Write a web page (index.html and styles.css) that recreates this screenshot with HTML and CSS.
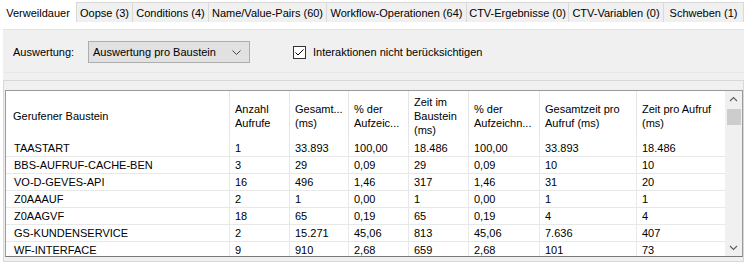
FILE: index.html
```html
<!DOCTYPE html>
<html>
<head>
<meta charset="utf-8">
<link rel="stylesheet" href="styles.css">
</head>
<body>
<div class="tabs">
  <div class="tab active">Verweildauer</div>
  <div class="tab">Oopse (3)</div>
  <div class="tab">Conditions (4)</div>
  <div class="tab">Name/Value-Pairs (60)</div>
  <div class="tab">Workflow-Operationen (64)</div>
  <div class="tab">CTV-Ergebnisse (0)</div>
  <div class="tab">CTV-Variablen (0)</div>
  <div class="tab last">Schweben (1)</div>
</div>
<div class="page">
  <div class="toolbar">
    <span class="label">Auswertung:</span>
    <div class="combo">
      <span>Auswertung pro Baustein</span>
      <svg class="chev" width="9" height="5" viewBox="0 0 9 5"><path d="M0.5 0.5 L4.5 4.5 L8.5 0.5" fill="none" stroke="#444" stroke-width="1"/></svg>
    </div>
    <label class="check">
      <span class="box"><svg width="11" height="11" viewBox="0 0 11 11"><path d="M1.5 5.5 L4 8 L9.5 2.5" fill="none" stroke="#000" stroke-width="1"/></svg></span>
      <span>Interaktionen nicht berücksichtigen</span>
    </label>
  </div>
  <div class="splitter"></div>
  <div class="gridpanel">
    <div class="grid">
      <div class="cells">
        <div class="hd first"><span>Gerufener Baustein</span></div>
        <div class="hd"><span>Anzahl<br>Aufrufe</span></div>
        <div class="hd"><span>Gesamt...<br>(ms)</span></div>
        <div class="hd"><span>% der<br>Aufzeic...</span></div>
        <div class="hd"><span>Zeit im<br>Baustein<br>(ms)</span></div>
        <div class="hd"><span>% der<br>Aufzeichn...</span></div>
        <div class="hd"><span>Gesamtzeit pro<br>Aufruf (ms)</span></div>
        <div class="hd lastcol"><span>Zeit pro Aufruf<br>(ms)</span></div>

        <div class="c first">TAASTART</div><div class="c">1</div><div class="c">33.893</div><div class="c">100,00</div><div class="c">18.486</div><div class="c">100,00</div><div class="c">33.893</div><div class="c lastcol">18.486</div>
        <div class="c first">BBS-AUFRUF-CACHE-BEN</div><div class="c">3</div><div class="c">29</div><div class="c">0,09</div><div class="c">29</div><div class="c">0,09</div><div class="c">10</div><div class="c lastcol">10</div>
        <div class="c first">VO-D-GEVES-API</div><div class="c">16</div><div class="c">496</div><div class="c">1,46</div><div class="c">317</div><div class="c">1,46</div><div class="c">31</div><div class="c lastcol">20</div>
        <div class="c first">Z0AAAUF</div><div class="c">2</div><div class="c">1</div><div class="c">0,00</div><div class="c">1</div><div class="c">0,00</div><div class="c">1</div><div class="c lastcol">1</div>
        <div class="c first">Z0AAGVF</div><div class="c">18</div><div class="c">65</div><div class="c">0,19</div><div class="c">65</div><div class="c">0,19</div><div class="c">4</div><div class="c lastcol">4</div>
        <div class="c first">GS-KUNDENSERVICE</div><div class="c">2</div><div class="c">15.271</div><div class="c">45,06</div><div class="c">813</div><div class="c">45,06</div><div class="c">7.636</div><div class="c lastcol">407</div>
        <div class="c first">WF-INTERFACE</div><div class="c">9</div><div class="c">910</div><div class="c">2,68</div><div class="c">659</div><div class="c">2,68</div><div class="c">101</div><div class="c lastcol">73</div>
      </div>
      <div class="vscroll">
        <div class="sbtn"><svg width="17" height="17" viewBox="0 0 17 17"><path d="M5 10 L8.5 6.5 L12 10" fill="none" stroke="#606060" stroke-width="1.2"/></svg></div>
        <div class="track"><div class="thumb"></div></div>
        <div class="sbtn"><svg width="17" height="17" viewBox="0 0 17 17"><path d="M5 7 L8.5 10.5 L12 7" fill="none" stroke="#606060" stroke-width="1.2"/></svg></div>
      </div>
    </div>
  </div>
</div>
</body>
</html>
```
FILE: styles.css
```css
* { box-sizing: border-box; }
html, body { margin: 0; padding: 0; }
body {
  width: 747px;
  height: 263px;
  overflow: hidden;
  background: #fff;
  font-family: "Liberation Sans", Arial, sans-serif;
  font-size: 11px;
  color: #000;
}

/* Tabs */
.tabs {
  display: flex;
  align-items: flex-end;
  height: 22px;
}
.tab {
  height: 20px;
  padding-top: 1px;
  line-height: 19px;
  text-align: center;
  white-space: nowrap;
  background: #f0f0f0;
  border: 1px solid #d9d9d9;
  border-bottom: none;
  border-right: none;
}
.tab.active {
  width: 76px;
  height: 22px;
  padding-top: 4px;
  line-height: 18px;
  background: #fff;
  border: none;
}
.tab:nth-child(2) { width: 56px; }
.tab:nth-child(3) { width: 76px; }
.tab:nth-child(4) { width: 118px; }
.tab:nth-child(5) { width: 140px; }
.tab:nth-child(6) { width: 102px; }
.tab:nth-child(7) { width: 95px; }
.tab.last { width: 81px; border-right: 1px solid #d9d9d9; }

/* Page */
.page {
  height: 241px;
  padding: 7px 3px 0;
  display: flex;
  flex-direction: column;
  background: #fff;
}
.toolbar {
  height: 43px;
  flex: none;
  display: flex;
  align-items: center;
  padding: 2px 10px 0;
  background: #f0f0f0;
  border-top: 1px solid #e2e2e2;
}
.label { width: 75px; flex: none; }
.combo {
  width: 162px;
  height: 22px;
  flex: none;
  display: flex;
  align-items: center;
  justify-content: space-between;
  padding: 0 8px 0 4px;
  background: #e1e1e1;
  border: 1px solid #adadad;
}
.chev { display: block; }
.check {
  margin-left: 43px;
  display: flex;
  align-items: center;
  gap: 7px;
}
.box {
  width: 13px;
  height: 13px;
  border: 1px solid #333;
  background: #fff;
  display: block;
}
.box svg { display: block; }

.splitter {
  height: 8px;
  flex: none;
  background: #f0f0f0;
  border-top: 1px solid #e8e8e8;
}

.gridpanel {
  height: 182px;
  flex: none;
  background: #f0f0f0;
  border: 1px solid #d8d8d8;
  padding: 9px 0 0 1px;
}
.grid {
  width: 738px;
  height: 167px;
  display: flex;
  border: 1px solid #9a9a9a;
  border-bottom-color: #7a7a7a;
  background: #fff;
}
.cells {
  flex: 1;
  overflow: hidden;
  display: grid;
  grid-template-columns: 224px 60px 59px 60px 60px 71px 97px 88px;
  grid-template-rows: 49px;
  grid-auto-rows: 17px;
  align-content: start;
}
.hd {
  display: flex;
  align-items: center;
  padding-left: 5px;
  line-height: 14px;
  border-right: 1px solid #e5e5e5;
  white-space: nowrap;
  overflow: hidden;
}
.hd.first { padding-left: 7px; }
.c {
  padding-left: 5px;
  line-height: 16px;
  border-right: 1px solid #e8e8e8;
  border-bottom: 1px solid #e8e8e8;
  white-space: nowrap;
  overflow: hidden;
}
.c.first { padding-left: 8px; }
.lastcol { border-right: none; }

.vscroll {
  width: 17px;
  flex: none;
  display: flex;
  flex-direction: column;
  background: #f0f0f0;
}
.sbtn { height: 17px; flex: none; }
.sbtn svg { display: block; }
.track { flex: 1; padding: 1px 1px 0 2px; }
.thumb {
  height: 16px;
  background: #cdcdcd;
}
```
